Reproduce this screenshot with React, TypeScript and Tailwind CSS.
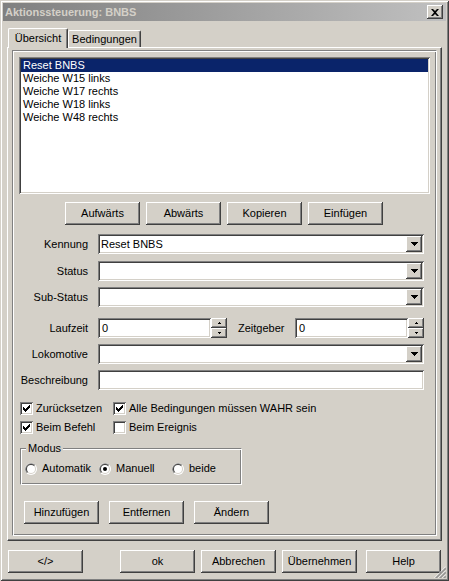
import React from "react";

const raised =
  "shadow-[inset_-1px_-1px_#404040,inset_1px_1px_#ffffff,inset_-2px_-2px_#808080,inset_2px_2px_#d4d0c8]";
const sunken =
  "shadow-[inset_1px_1px_#808080,inset_-1px_-1px_#ffffff,inset_2px_2px_#404040,inset_-2px_-2px_#d4d0c8]";
const etched =
  "border border-t-[#808080] border-l-[#808080] border-r-white border-b-white shadow-[inset_1px_1px_#ffffff,inset_-1px_-1px_#808080]";

function Btn({ children, className = "" }: { children: React.ReactNode; className?: string }) {
  return (
    <div
      className={`${raised} bg-[#d4d0c8] h-[23px] w-[75px] flex items-center justify-center text-[11px] text-black ${className}`}
    >
      {children}
    </div>
  );
}

function DownArrow() {
  return (
    <svg width="7" height="4" viewBox="0 0 7 4">
      <path d="M0 0h7v1h-1v1h-1v1h-1v1h-1v-1h-1v-1h-1v-1h-1z" fill="#000" />
    </svg>
  );
}

function Combo({ value = "" }: { value?: string }) {
  return (
    <div className={`${sunken} bg-white h-[20px] flex-1 flex items-center pl-[3px] pr-[2px]`}>
      <span className="flex-1 text-[11px] leading-none">{value}</span>
      <div className={`${raised} bg-[#d4d0c8] w-[16px] h-[16px] flex items-center justify-center`}>
        <DownArrow />
      </div>
    </div>
  );
}

function Spinner() {
  return (
    <div className="flex flex-col w-[16px] h-[20px]">
      <div className={`${raised} bg-[#d4d0c8] h-[10px] flex items-center justify-center`}>
        <svg width="3" height="2" viewBox="0 0 3 2">
          <path d="M1 0h1v1h1v1h-3v-1h1z" fill="#000" />
        </svg>
      </div>
      <div className={`${raised} bg-[#d4d0c8] h-[10px] flex items-center justify-center`}>
        <svg width="3" height="2" viewBox="0 0 3 2">
          <path d="M0 0h3v1h-1v1h-1v-1h-1z" fill="#000" />
        </svg>
      </div>
    </div>
  );
}

function Check({ checked, label }: { checked: boolean; label: string }) {
  return (
    <div className="flex items-center h-[13px]">
      <div className={`${sunken} bg-white w-[13px] h-[13px] flex items-center justify-center`}>
        {checked && (
          <svg width="7" height="7" viewBox="0 0 7 7">
            <path
              d="M6 0h1v1h-1zM5 1h2v1h-2zM0 2h1v1h-1zM4 2h3v1h-3zM0 3h2v1h-2zM3 3h3v1h-3zM0 4h5v1h-5zM1 5h3v1h-3zM2 6h1v1h-1z"
              fill="#000"
            />
          </svg>
        )}
      </div>
      <span className="ml-[3px] text-[11px] leading-none">{label}</span>
    </div>
  );
}

function Radio({ checked, label, className = "" }: { checked: boolean; label: string; className?: string }) {
  return (
    <div className={`flex items-center h-[13px] ${className}`}>
      <svg width="12" height="12" viewBox="0 0 12 12">
        <circle cx="6" cy="6" r="6" fill="#ffffff" />
        <path d="M1.76 10.24A6 6 0 0 1 10.24 1.76Z" fill="#808080" />
        <circle cx="6" cy="6" r="5" fill="#d4d0c8" />
        <path d="M2.46 9.54A5 5 0 0 1 9.54 2.46Z" fill="#404040" />
        <circle cx="6" cy="6" r="4" fill="#ffffff" />
        {checked && <circle cx="6" cy="6" r="2" fill="#000" />}
      </svg>
      <span className="ml-[5px] text-[11px] leading-none">{label}</span>
    </div>
  );
}

function Row({ label, children, className = "" }: { label: string; children: React.ReactNode; className?: string }) {
  return (
    <div className={`flex items-center h-[20px] pr-[11px] ${className}`}>
      <span className="w-[74px] mr-[10px] text-right text-[11px] leading-none">{label}</span>
      {children}
    </div>
  );
}

const items = ["Reset BNBS", "Weiche W15 links", "Weiche W17 rechts", "Weiche W18 links", "Weiche W48 rechts"];

export default function App() {
  return (
    <div
      className={`relative w-[449px] h-[581px] bg-[#d4d0c8] p-[3px] flex flex-col text-black font-['Liberation_Sans',Arial,sans-serif] shadow-[inset_1px_1px_#d4d0c8,inset_-1px_-1px_#404040,inset_2px_2px_#ffffff,inset_-2px_-2px_#808080]`}
    >
      {/* title bar */}
      <div className="h-[18px] bg-linear-to-r from-[#808080] to-[#c0c0c0] flex items-center pl-[2px] pr-[3px]">
        <span className="flex-1 text-[11px] font-bold text-[#d4d0c8] leading-none">Aktionssteuerung: BNBS</span>
        <div className={`${raised} bg-[#d4d0c8] w-[16px] h-[14px] flex items-center justify-center`}>
          <svg width="8" height="7" viewBox="0 0 8 7">
            <path d="M0 0h2l2 2 2-2h2l-3 3.5 3 3.5h-2l-2-2-2 2h-2l3-3.5z" fill="#000" />
          </svg>
        </div>
      </div>

      {/* tabs */}
      <div className="mt-[7px] h-[19px] flex items-end ml-[5px]">
        <div className="relative z-10 -mb-px h-[20px] w-[60px] bg-[#d4d0c8] border-l border-t border-white rounded-tl-[2px] shadow-[inset_-1px_0_#808080] border-r border-r-[#404040] rounded-tr-[2px] flex items-center justify-center text-[11px]">
          Übersicht
        </div>
        <div className="h-[17px] w-[73px] border-l border-t border-white rounded-tl-[2px] border-r border-r-[#404040] shadow-[inset_-1px_0_#808080] rounded-tr-[2px] flex items-center justify-center text-[11px]">
          Bedingungen
        </div>
      </div>

      {/* tab panel */}
      <div className="ml-[4px] mr-[4px] h-[494px] border-l border-t border-white border-r border-b border-r-[#404040] border-b-[#404040] shadow-[inset_-1px_-1px_#808080] pt-[2px] pl-[4px] pr-[4px] pb-[4px] flex flex-col">
        <div className={`${etched} p-[1px] flex-1 flex flex-col`}>
          <div className="px-[5px] mt-[5px]">
            <div className={`${sunken} bg-white h-[137px] p-[2px]`}>
              {items.map((it, i) => (
                <div
                  key={it}
                  className={`h-[13px] leading-[13px] pl-[2px] text-[11px] ${i === 0 ? "bg-[#0a246a] text-white" : ""}`}
                >
                  {it}
                </div>
              ))}
            </div>
          </div>

          <div className="mt-[8px] flex justify-center gap-[6px] pr-[1px]">
            <Btn className="w-[74px]">Aufwärts</Btn>
            <Btn className="w-[74px]">Abwärts</Btn>
            <Btn className="w-[74px]">Kopieren</Btn>
            <Btn className="w-[74px]">Einfügen</Btn>
          </div>

          <Row label="Kennung" className="mt-[9px]">
            <Combo value="Reset BNBS" />
          </Row>
          <Row label="Status" className="mt-[7px]">
            <Combo />
          </Row>
          <Row label="Sub-Status" className="mt-[6px]">
            <Combo />
          </Row>
          <Row label="Laufzeit" className="mt-[11px]">
            <div className={`${sunken} bg-white h-[20px] w-[113px] flex items-center pl-[4px] text-[11px]`}>0</div>
            <Spinner />
            <span className="ml-[11px] w-[57px] text-[11px] leading-none">Zeitgeber</span>
            <div className={`${sunken} bg-white h-[20px] flex-1 flex items-center pl-[4px] text-[11px]`}>0</div>
            <Spinner />
          </Row>
          <Row label="Lokomotive" className="mt-[6px]">
            <Combo />
          </Row>
          <Row label="Beschreibung" className="mt-[6px]">
            <div className={`${sunken} bg-white h-[20px] flex-1`} />
          </Row>

          <div className="mt-[12px] pl-[6px] grid grid-cols-[93px_auto] gap-y-[6px]">
            <Check checked label="Zurücksetzen" />
            <Check checked label="Alle Bedingungen müssen WAHR sein" />
            <Check checked label="Beim Befehl" />
            <Check checked={false} label="Beim Ereignis" />
          </div>

          <div className={`${etched} relative mt-[14px] ml-[6px] w-[222px] h-[37px] pt-[13px] pl-[4px] flex`}>
            <span className="absolute left-[5px] -top-[7px] px-[2px] bg-[#d4d0c8] text-[11px] leading-[13px]">Modus</span>
            <Radio checked={false} label="Automatik" className="w-[74px]" />
            <Radio checked label="Manuell" className="w-[73px]" />
            <Radio checked={false} label="beide" />
          </div>

          <div className="mt-[16px] pl-[10px] flex gap-[10px]">
            <Btn>Hinzufügen</Btn>
            <Btn>Entfernen</Btn>
            <Btn>Ändern</Btn>
          </div>
        </div>
      </div>

      {/* dialog buttons */}
      <div className="mt-[9px] flex">
        <Btn className="ml-[5px]">&lt;/&gt;</Btn>
        <Btn className="ml-[37px]">ok</Btn>
        <Btn className="ml-[6px]">Abbrechen</Btn>
        <Btn className="ml-[6px]">Übernehmen</Btn>
        <Btn className="ml-[9px]">Help</Btn>
      </div>

      {/* size grip */}
      <svg className="absolute right-[3px] bottom-[3px]" width="12" height="12" viewBox="0 0 12 12">
        {[0, 4, 8].map((k) => (
          <g key={k}>
            <line x1={12} y1={k + 0.5} x2={k + 0.5} y2={12} stroke="#ffffff" />
            <line x1={12} y1={k + 1.5} x2={k + 1.5} y2={12} stroke="#808080" />
            <line x1={12} y1={k + 2.5} x2={k + 2.5} y2={12} stroke="#808080" />
          </g>
        ))}
      </svg>
    </div>
  );
}
